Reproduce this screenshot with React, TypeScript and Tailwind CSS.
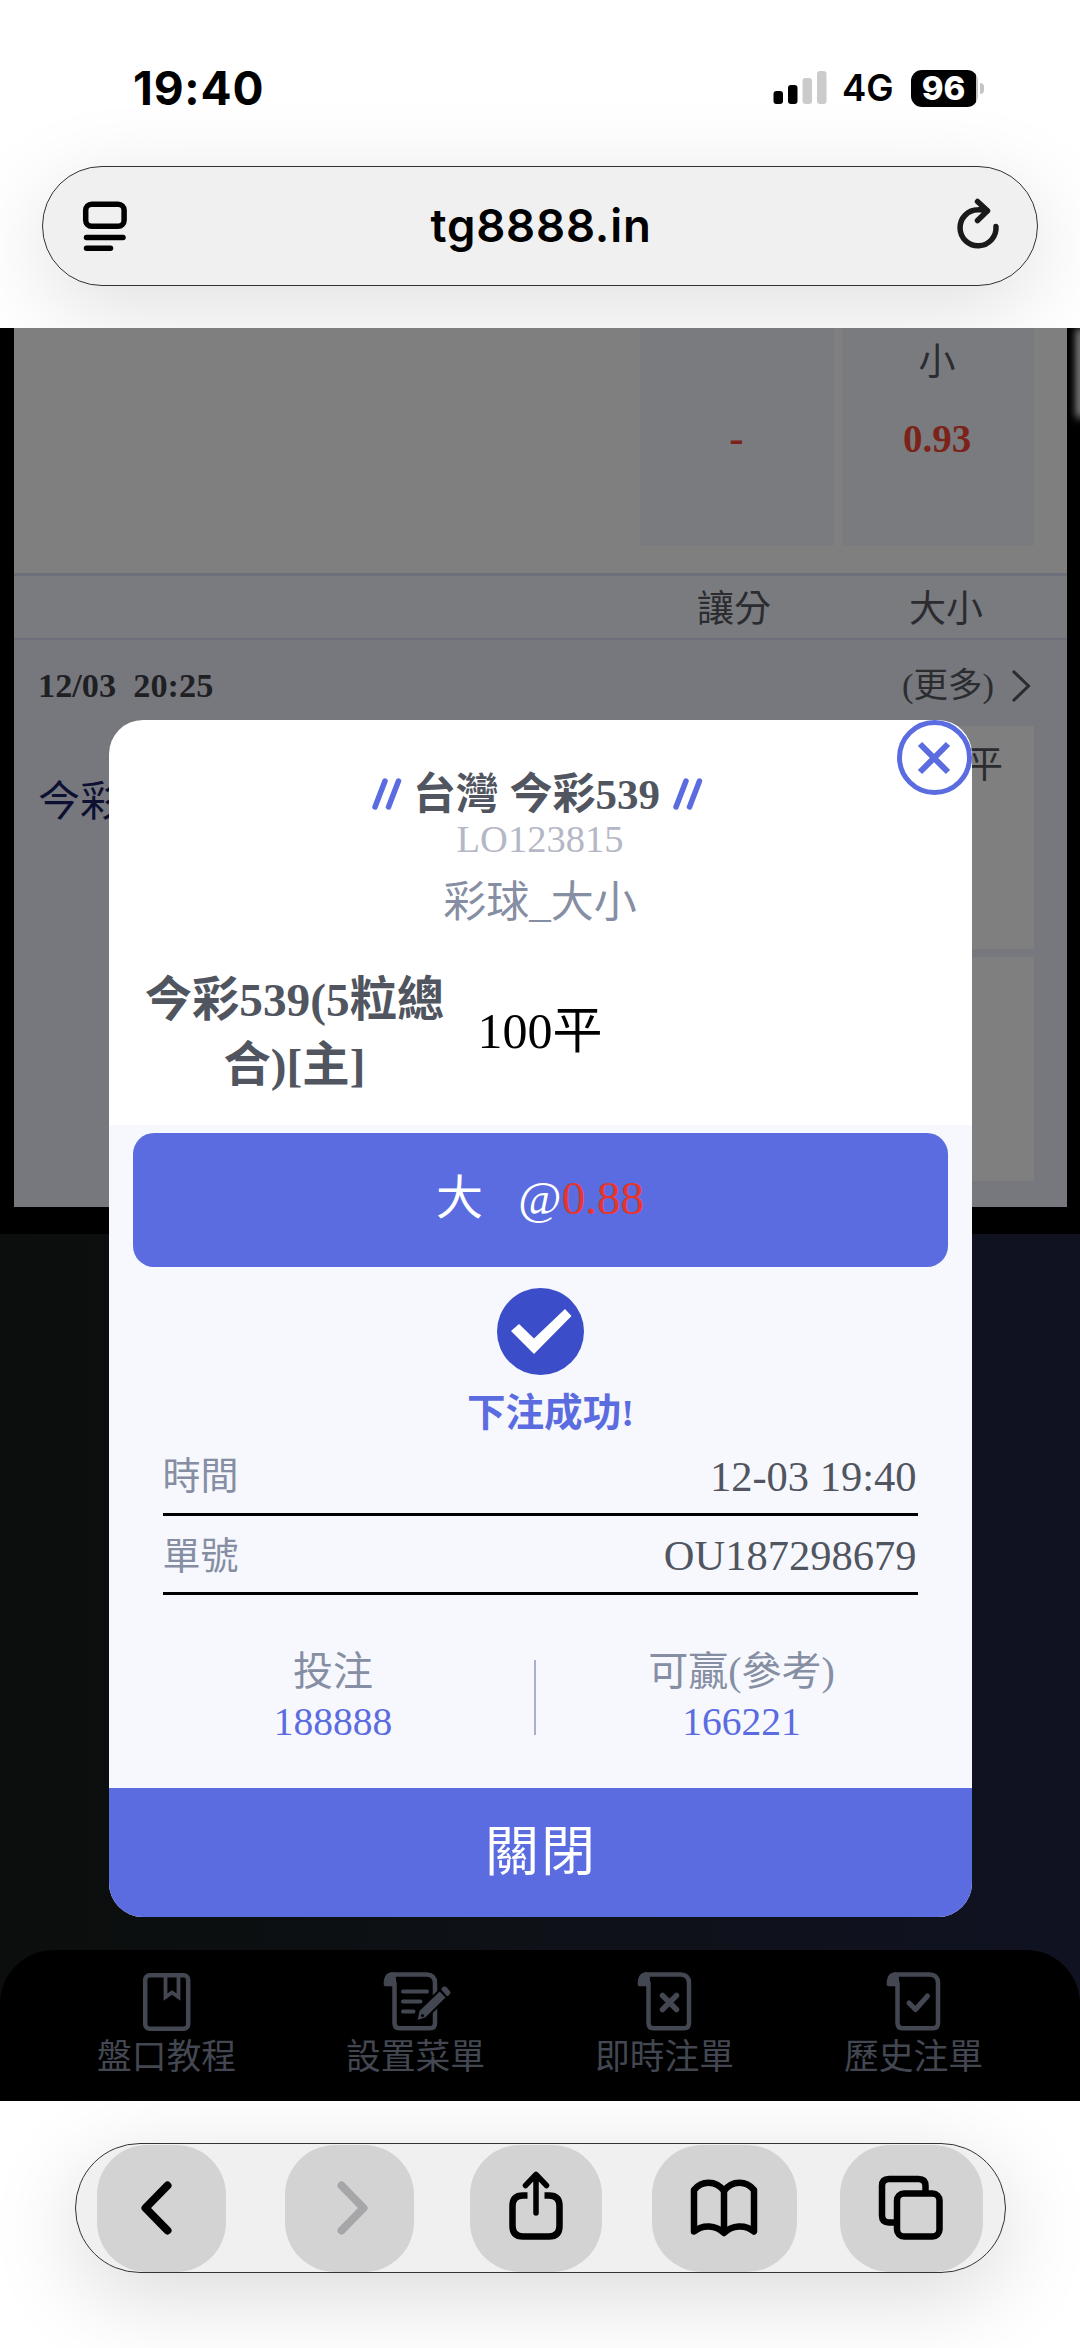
import type { ReactNode } from "react";

const serif = "font-['Liberation_Serif','Noto_Sans_CJK_TC',serif]";

/** ステータスバー（時刻・電波・バッテリー） */
function StatusBar() {
  return (
    <div className="flex h-[166px] items-start justify-between pt-[64px] pr-[96px] pl-[133px]">
      <span className="text-[46px] leading-[48px] font-bold tracking-[0.8px]">19:40</span>
      <div className="flex h-[48px] items-center">
        <svg className="mr-[15px] h-[34px] w-[54px]" viewBox="0 0 54 34">
          <rect x="0.5" y="20" width="9.5" height="13" rx="3" fill="#000" />
          <rect x="15" y="14" width="9.5" height="19" rx="3" fill="#000" />
          <rect x="29.5" y="7" width="9.5" height="26" rx="3" fill="#cbcbcb" />
          <rect x="44" y="0" width="9.5" height="33" rx="3" fill="#cbcbcb" />
        </svg>
        <span className="w-[69px] text-[36.5px] leading-[48px] font-semibold">4G</span>
        <span className="flex h-[37px] w-[67px] items-center justify-center rounded-[11px] bg-linear-to-r from-black from-97% to-[#c4c4c4] to-97% pr-[2px] text-[33px] leading-none font-extrabold text-white">
          96
        </span>
        <span className="ml-[2px] h-[11px] w-[4px] rounded-r-full bg-[#c4c4c4]" />
      </div>
    </div>
  );
}

function AddressBar() {
  return (
    <div className="mx-[42px] flex h-[119.5px] items-center justify-between rounded-[60px] border-[1.5px] border-[#333] bg-[#f0f0f0] pr-[37px] pl-[39px] shadow-[0_22px_90px_rgba(0,0,0,0.13)]">
      <svg className="h-[52px] w-[46px]" viewBox="0 0 46 52" fill="none" stroke="#000" strokeWidth="5.5" strokeLinecap="round">
        <rect x="3.7" y="4.2" width="38.4" height="22" rx="6" />
        <path d="M4.5 37.500H41M4.500 48.200H28.500" />
      </svg>
      <span className="text-[45.5px] leading-none font-semibold tracking-[0.8px]">tg8888.in</span>
      <svg className="mb-[4px] h-[52px] w-[46px]" viewBox="0 0 46 52" fill="none" stroke="#1a1a1a" strokeWidth="5.500" strokeLinecap="round" strokeLinejoin="round">
        <path d="M42 28.500A18 18 0 1 1 24 11.800Q29 11.500 33 12.800" />
        <path d="M23.500 3.500L33.500 12.800L23.500 22.500" />
      </svg>
    </div>
  );
}

/** モーダルの後ろに見えるオッズ表 */
function OddsBoard() {
  return (
    <div className="mr-[13px] ml-[14px] h-[879px] overflow-hidden bg-[#77787d] text-[37px] text-[#2b2c30]">
      <div className="flex h-[245px] justify-end gap-[8px] bg-[#7f7f7f] pr-[33px]">
        <div className="flex h-[218px] w-[194px] flex-col items-center bg-[#7a7b7f] pt-[88px] pr-[1px]">
          <b className="text-[43px] leading-[44px] text-[#7b2319]">-</b>
        </div>
        <div className="flex h-[218px] w-[192px] flex-col items-center bg-[#7a7b7f] pt-[13px] pr-[2px]">
          <span className="leading-[44px]">小</span>
          <b className="mt-[32px] text-[39px] leading-[44px] text-[#7b2319]">0.93</b>
        </div>
      </div>
      <div className="flex h-[67px] items-center justify-end border-t-[3px] border-b-2 border-[#6d6f7a] bg-[#7a7b7f] pt-[5px] pr-[84px]">
        <span className="w-[212px]">讓分</span>
        <span>大小</span>
      </div>
      <div className="flex h-[86px] items-center justify-between pt-[6px] pr-[36px] pl-[24px]">
        <b className="text-[34.3px] whitespace-pre text-[#1f2023]">{"12/03  20:25"}</b>
        <div className="flex items-center text-[34.500px]">
          (更多)
          <svg className="ml-[17px] h-[34px] w-[20px]" viewBox="0 0 20 34" fill="none" stroke="#2b2c30" strokeWidth="3">
            <path d="M2 2L17.5 17L2 32" />
          </svg>
        </div>
      </div>
      <div className="flex justify-between pr-[33px] pl-[24px]">
        <span className="pt-[52px] text-[42px] leading-[48px] text-[#0d1033]">今彩539</span>
        <div className="flex flex-col gap-[8px]">
          <div className="h-[223px] w-[192px] bg-[#7f7f7f] pt-[18px] pr-[31px] text-right leading-[44px]">100平</div>
          <div className="h-[224px] w-[192px] bg-[#7f7f7f]" />
        </div>
      </div>
    </div>
  );
}

function Slashes() {
  return (
    <svg className="h-[34px] w-[30px]" viewBox="0 0 30 34" stroke="#5b6ce0" strokeWidth="5.5" strokeLinecap="round">
      <path d="M3 30L13 4M16.500 30L26.500 4" />
    </svg>
  );
}

function InfoRow({ label, value }: { label: string; value: string }) {
  return (
    <div className="mx-[54px] flex h-[79.5px] items-center justify-between border-b-[3px] border-black pt-[5px] pr-[1px]">
      <span className="text-[38px] text-[#868ea3]">{label}</span>
      <span className="text-[42.5px] text-[#50555f]">{value}</span>
    </div>
  );
}

function Amount({ label, value, width }: { label: string; value: string; width: string }) {
  return (
    <div className={`${width} text-center leading-[50px]`}>
      <p className="text-[40px] text-[#868ea3]">{label}</p>
      <p className="text-[39.500px] text-[#5b6ce0]">{value}</p>
    </div>
  );
}

function BetModal() {
  return (
    <section className="absolute top-[392px] left-[108.5px] flex h-[1197px] w-[863px] flex-col overflow-hidden rounded-[34px] bg-white">
      <button className="absolute top-0 right-0 flex size-[75px] items-center justify-center rounded-full border-[5.5px] border-[#5b6ce0] bg-white">
        <svg className="size-[34px]" viewBox="0 0 34 34" stroke="#5b6ce0" strokeWidth="6">
          <path d="M3 3L31 31M31 3L3 31" />
        </svg>
      </button>

      <header className="h-[208px] pt-[48px] text-center">
        <h1 className="flex h-[52px] items-center justify-center gap-[11px] pr-[5px] text-[43px] font-bold text-[#50555f]">
          <Slashes />
          <span className="mr-[2px] pt-[2px]">台灣 今彩539</span>
          <Slashes />
        </h1>
        <p className="text-[38.5px] leading-[38px] text-[#b4b7c5]">LO123815</p>
        <p className="mt-[19px] text-[43px] leading-[52px] text-[#868ea3]">彩球_大小</p>
      </header>

      <div className="flex h-[197px] items-center gap-[20px] pt-[9px] pl-[23px]">
        <b className="w-[326px] pt-[3px] text-center text-[47.3px] leading-[65px] text-[#50555f]">
          今彩539(5粒總
          <br />
          合)[主]
        </b>
        <span className="text-[50px] text-black">100平</span>
      </div>

      <div className="flex-1 bg-[#f7f8fd] pt-[8px]">
        <div className="mx-[24px] flex h-[134px] items-center justify-center rounded-[21px] bg-[#5b6ce0] pb-[4px] text-[47px] whitespace-pre text-white">
          <span>{"大   @"}</span>
          <span className="text-[#e8352b]">0.88</span>
        </div>
        <svg className="mx-auto mt-[21px] size-[87px]" viewBox="0 0 87 87">
          <circle cx="43.5" cy="43.5" r="43.5" fill="#3b4dc8" />
          <path d="M14 43L22 36L37 50.5L68 21L74.5 28L37 66Z" fill="#fff" />
        </svg>
        <p className="mt-[15px] pl-[21px] text-center text-[38.600px] leading-[46px] font-bold text-[#5b6ce0]">下注成功!</p>
        <InfoRow label="時間" value="12-03 19:40" />
        <InfoRow label="單號" value="OU187298679" />
        <div className="mx-[24px] flex pt-[52px]">
          <Amount label="投注" value="188888" width="w-[401px]" />
          <div className="mt-[13px] h-[75px] w-[2.5px] bg-[#a9b0cf]" />
          <Amount label="可贏(參考)" value="166221" width="w-[411px]" />
        </div>
      </div>

      <button className="h-[129px] bg-[#5b6ce0] pt-[2px] pl-[2px] text-[54px] leading-[127px] tracking-[2px] text-white">關閉</button>
    </section>
  );
}

const sheet = "M11 3.500H46Q54 4 54 12V52Q54 57.200 49 57.200H18.500Q13.500 57.200 13.500 52V12";

function Scroll({ children }: { children: ReactNode }) {
  return (
    <svg className="h-[60px] w-[60px]" viewBox="0 0 60 60" fill="none" stroke="#434752" strokeWidth="4.5" strokeLinecap="round" strokeLinejoin="round">
      <path d="M2.700 13.500V11C3.500 4 6.500 1.200 11.500 1.200C15.500 2 15 6 15 15.200H4.500Q2.700 15.200 2.700 13.500Z" fill="#434752" stroke="none" />
      {children}
    </svg>
  );
}

function NavItem({ label, children }: { label: string; children: ReactNode }) {
  return (
    <div className="flex w-[249px] flex-col items-center pt-[21px]">
      {children}
      <span className="mt-[5px] text-[34.8px] leading-[44px]">{label}</span>
    </div>
  );
}

function NavBar() {
  return (
    <nav className="flex h-[151px] justify-center rounded-t-[54px] bg-black text-[#434752]">
      <NavItem label="盤口教程">
        <svg className="h-[60px] w-[50px]" viewBox="0 0 50 60" fill="none" stroke="#434752" strokeWidth="4.5">
          <rect x="3.2" y="4.2" width="43" height="53.5" rx="4.5" />
          <path d="M23.500 4V26L30 21.500L36.500 26V4" strokeWidth="3.800" />
        </svg>
      </NavItem>
      <NavItem label="設置菜單">
        <svg className="h-[60px] w-[70px]" viewBox="0 0 70 60" fill="none" stroke="#434752" strokeWidth="4.5" strokeLinecap="round" strokeLinejoin="round">
          <path d="M2.700 13.500V11C3.500 4 6.500 1.200 11.500 1.200C15.500 2 15 6 15 15.200H4.500Q2.700 15.200 2.700 13.500Z" fill="#434752" stroke="none" />
          <path d={sheet} />
          <path d="M22 20.500H46M22 30.500H39.500M22 40.500H32.500" strokeWidth="4" />
          {/* 鉛筆の周囲を背景色で抜く */}
          <path d="M36.700 49L38.500 40L58.700 20.500L64.500 26.500L44.500 46.300Z" fill="#434752" stroke="#000" strokeWidth="4" paintOrder="stroke" />
          <path d="M62.500 18L64 17.500L67.500 21.500L66.500 23Z" fill="#434752" strokeWidth="4" />
          <circle cx="41.500" cy="44.500" r="1.600" fill="#000" stroke="none" />
        </svg>
      </NavItem>
      <NavItem label="即時注單">
        <Scroll>
          <path d={sheet} />
          <path d="M27.500 24.500L41.500 38.500M41.500 24.500L27.500 38.500" strokeWidth="5.5" />
        </Scroll>
      </NavItem>
      <NavItem label="歷史注單">
        <Scroll>
          <path d={sheet} />
          <path d="M25 32L31.500 38.500L43.500 25" strokeWidth="5" />
        </Scroll>
      </NavItem>
    </nav>
  );
}

const key = "flex h-[127px] items-center justify-center rounded-[50px] bg-[#d3d3d3]";

function Toolbar() {
  return (
    <footer className="h-[247px] bg-white pt-[42px]">
      <div className="mr-[74px] ml-[75px] flex h-[130px] items-center rounded-[65px] border-[1.5px] border-[#333] bg-[#f0f0f0] pl-[20.500px] shadow-[0_22px_90px_rgba(0,0,0,0.15)]">
        <button className={`${key} mr-[59px] w-[129px] pr-[10px]`}>
          <svg className="h-[56px] w-[34px]" viewBox="0 0 34 56" fill="none" stroke="#000" strokeWidth="8" strokeLinecap="round" strokeLinejoin="round">
            <path d="M28.5 5.5L6.5 28L28.5 50.5" />
          </svg>
        </button>
        <button className={`${key} mr-[56px] w-[129px] pl-[7px]`}>
          <svg className="h-[56px] w-[34px]" viewBox="0 0 34 56" fill="none" stroke="#a6a6a8" strokeWidth="8" strokeLinecap="round" strokeLinejoin="round">
            <path d="M5.5 5.5L27.5 28L5.5 50.5" />
          </svg>
        </button>
        <button className={`${key} mr-[50px] w-[132px] pb-[4px]`}>
          <svg className="h-[72px] w-[56px]" viewBox="0 0 56 72" fill="none" stroke="#000" strokeWidth="6.5" strokeLinejoin="round">
            <path d="M19.500 25.500H15Q4.500 25.500 4.500 36V56Q4.500 66.500 15 66.500H41Q51.500 66.500 51.500 56V36Q51.500 25.500 41 25.500H36.500" />
            <path d="M28 43V6M17.500 15.500L28 4.500L38.500 15.500" strokeWidth="5.5" strokeLinecap="round" />
          </svg>
        </button>
        <button className={`${key} mr-[43px] w-[145px]`}>
          <svg className="h-[62px] w-[68px]" viewBox="0 0 68 62" fill="none" stroke="#000" strokeWidth="6.5" strokeLinejoin="round">
            <path d="M34 14C26 2.500 11 3.500 4 13V54.500C13 47 26 48 34 56C42 48 55 47 64 54.500V13C57 3.500 42 2.500 34 14ZM34 14V56" />
          </svg>
        </button>
        <button className={`${key} w-[143px]`}>
          <svg className="h-[66px] w-[66px]" viewBox="0 0 66 66" fill="none" stroke="#000" strokeWidth="6.5">
            <path d="M16 47.500H11Q4 47.500 4 40.500V11Q4 4 11 4H40.500Q47.500 4 47.500 11V16" />
            <rect x="19" y="18.5" width="42.5" height="43" rx="7" />
          </svg>
        </button>
      </div>
    </footer>
  );
}

export default function App() {
  return (
    <div className="flex h-[2348px] w-[1080px] flex-col overflow-hidden bg-white font-[Inter,sans-serif] text-black">
      <header className="h-[328px] shrink-0 overflow-hidden bg-white">
        <StatusBar />
        <AddressBar />
      </header>
      <main className={`relative flex h-[1773px] shrink-0 flex-col overflow-hidden bg-black ${serif}`}>
        <OddsBoard />
        <div className="mt-[27px] flex flex-1 flex-col justify-end bg-linear-to-r from-[#0b0e0c] via-[#0e1117] to-[#101222]">
          <NavBar />
        </div>
        <div className="absolute top-0 -right-[4px] h-[90px] w-[7px] rounded-full bg-white/70 blur-[4px]" />
        <BetModal />
      </main>
      <Toolbar />
    </div>
  );
}
